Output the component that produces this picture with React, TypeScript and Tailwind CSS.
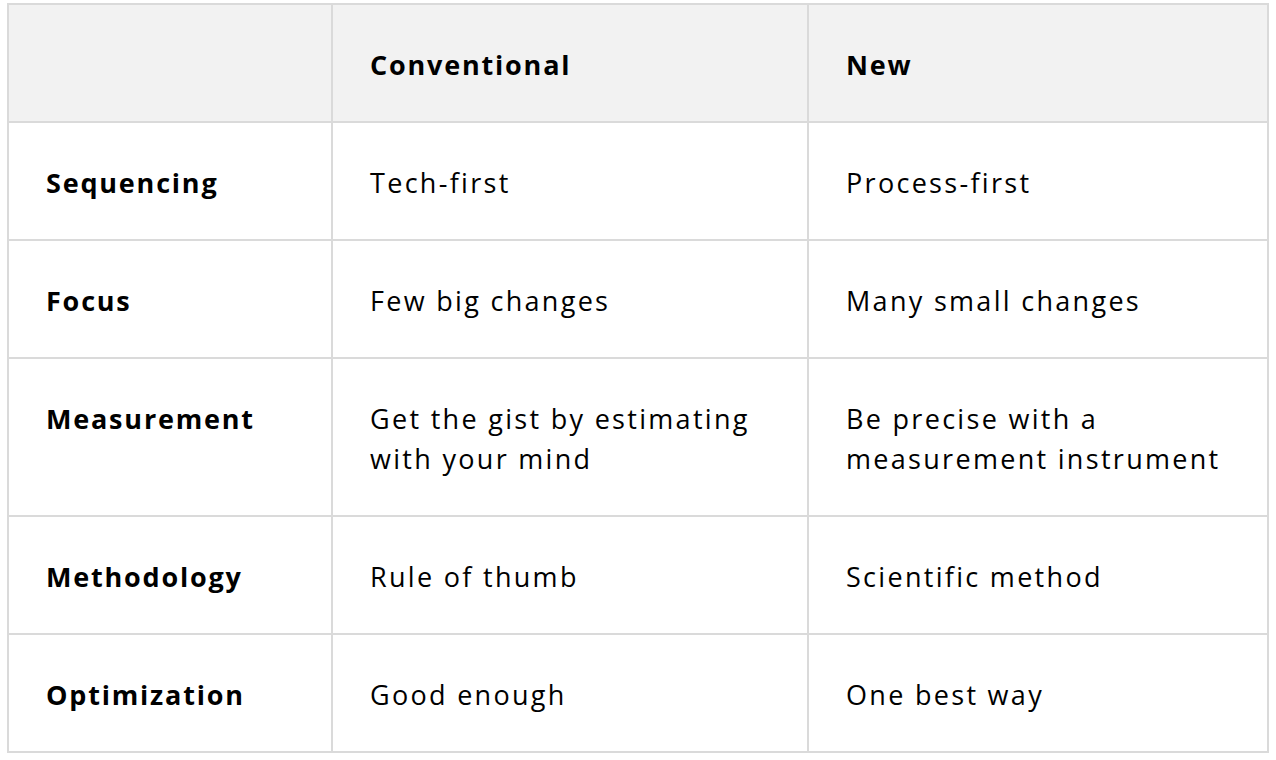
const rows: [string, string, string][] = [
  ['Sequencing', 'Tech-first', 'Process-first'],
  ['Focus', 'Few big changes', 'Many small changes'],
  ['Measurement', 'Get the gist by estimating with your mind', 'Be precise with a measurement instrument'],
  ['Methodology', 'Rule of thumb', 'Scientific method'],
  ['Optimization', 'Good enough', 'One best way'],
];

const cell = 'border-r-2 border-b-2 border-[#dadada] px-[37px] pt-[40px] pb-[36px]';
const bold = 'font-bold tracking-[1.8px]';

export default function App() {
  return (
    <div className="min-h-screen bg-white pl-[7px] pt-[3px] font-['Open_Sans','Noto_Sans',sans-serif] text-[27px] leading-[40px] tracking-[2.3px] text-black">
      <div className="grid w-[1262px] grid-cols-[324px_476px_460px] border-l-2 border-t-2 border-[#dadada]">
        <div className={`${cell} bg-[#f2f2f2]`} />
        <div className={`${cell} ${bold} bg-[#f2f2f2]`}>Conventional</div>
        <div className={`${cell} ${bold} bg-[#f2f2f2]`}>New</div>
        {rows.map(([label, conv, next]) => (
          <div key={label} className="contents">
            <div className={`${cell} ${bold}`}>{label}</div>
            <div className={cell}>{conv}</div>
            <div className={cell}>{next}</div>
          </div>
        ))}
      </div>
    </div>
  );
}
